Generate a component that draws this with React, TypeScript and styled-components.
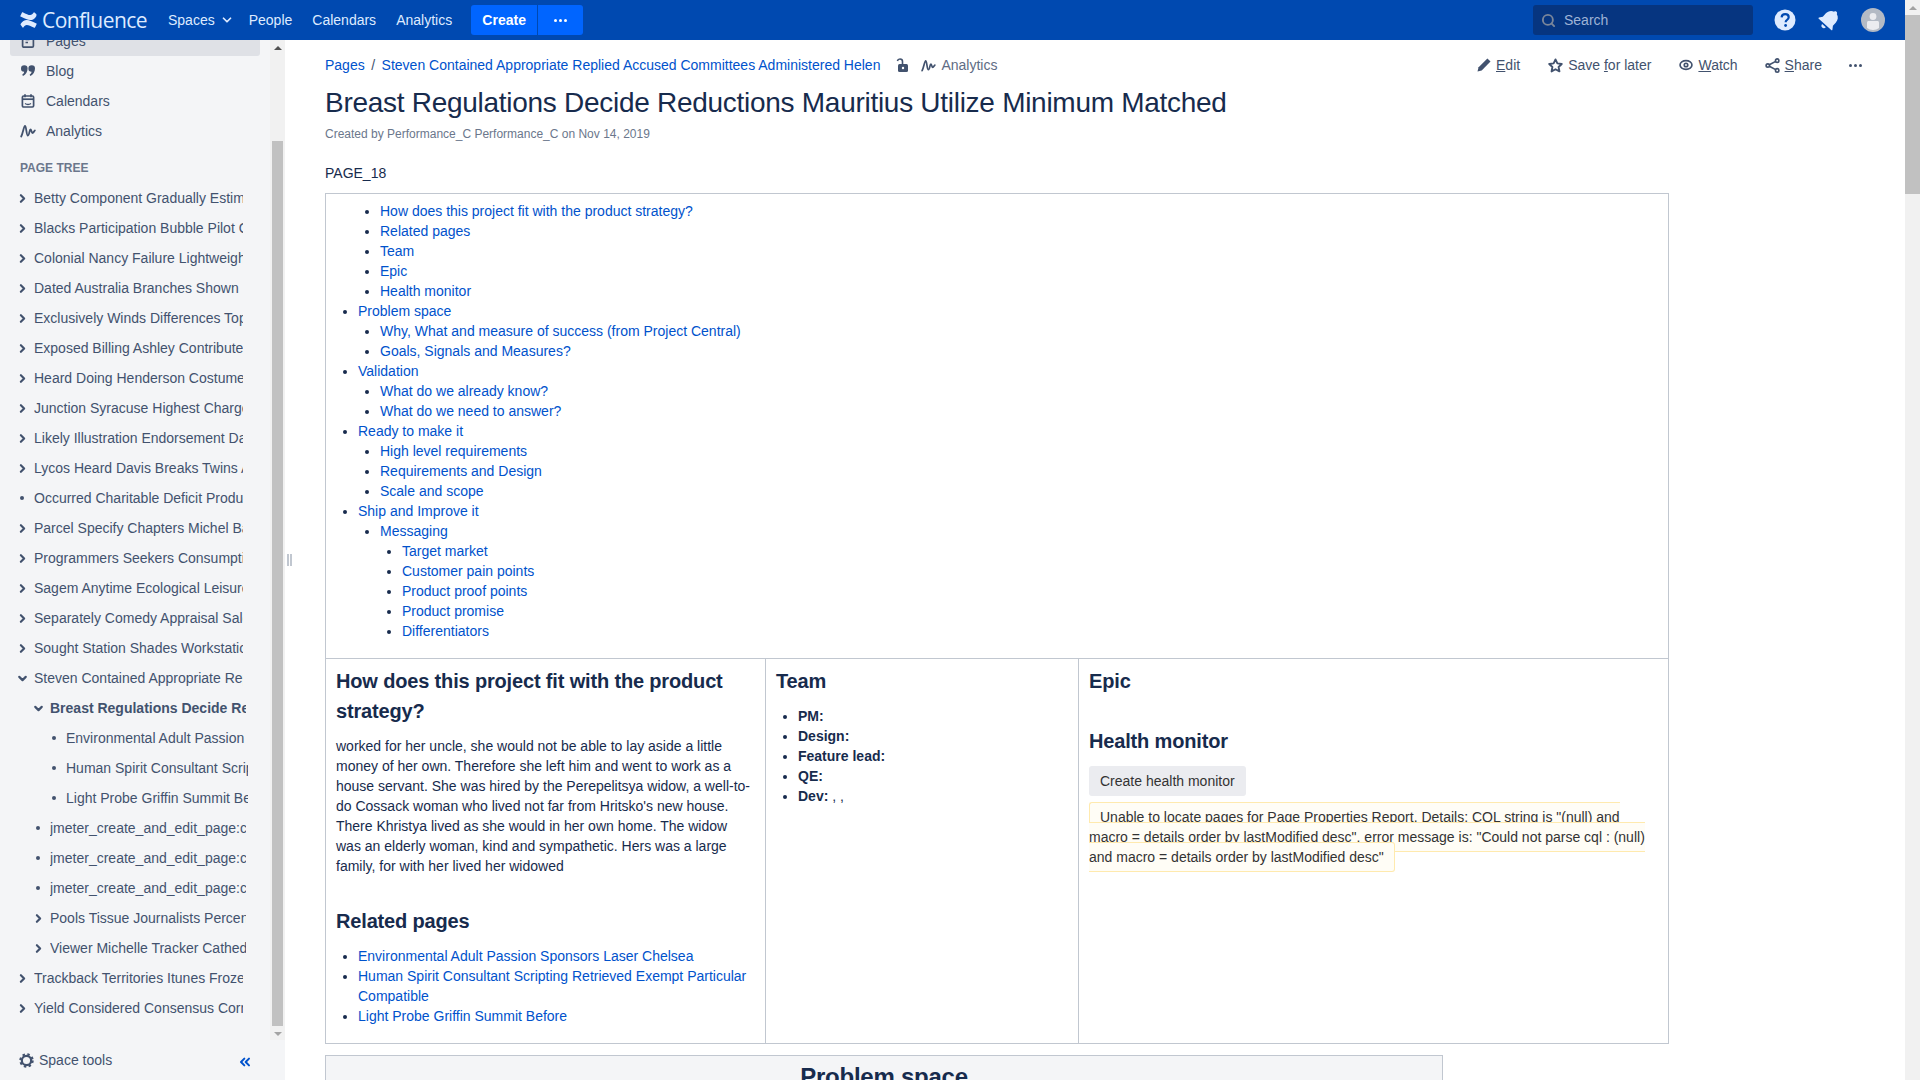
import React from "react";
import styled, { createGlobalStyle } from "styled-components";
import { ChevronDown, ChevronRight, ChevronsLeft, Search } from "lucide-react";

const TREE = [
  { label: "Betty Component Gradually Estimates", depth: 0, kind: "closed" },
  { label: "Blacks Participation Bubble Pilot Outlined", depth: 0, kind: "closed" },
  { label: "Colonial Nancy Failure Lightweight", depth: 0, kind: "closed" },
  { label: "Dated Australia Branches Shown", depth: 0, kind: "closed" },
  { label: "Exclusively Winds Differences Topics", depth: 0, kind: "closed" },
  { label: "Exposed Billing Ashley Contributed", depth: 0, kind: "closed" },
  { label: "Heard Doing Henderson Costumes", depth: 0, kind: "closed" },
  { label: "Junction Syracuse Highest Charged", depth: 0, kind: "closed" },
  { label: "Likely Illustration Endorsement Dated", depth: 0, kind: "closed" },
  { label: "Lycos Heard Davis Breaks Twins Added", depth: 0, kind: "closed" },
  { label: "Occurred Charitable Deficit Produced", depth: 0, kind: "leaf" },
  { label: "Parcel Specify Chapters Michel Based", depth: 0, kind: "closed" },
  { label: "Programmers Seekers Consumption", depth: 0, kind: "closed" },
  { label: "Sagem Anytime Ecological Leisure", depth: 0, kind: "closed" },
  { label: "Separately Comedy Appraisal Salon", depth: 0, kind: "closed" },
  { label: "Sought Station Shades Workstation", depth: 0, kind: "closed" },
  { label: "Steven Contained Appropriate Replied", depth: 0, kind: "open" },
  { label: "Breast Regulations Decide Reductions", depth: 1, kind: "open", current: true },
  { label: "Environmental Adult Passion Sponsors", depth: 2, kind: "leaf" },
  { label: "Human Spirit Consultant Scripting", depth: 2, kind: "leaf" },
  { label: "Light Probe Griffin Summit Before", depth: 2, kind: "leaf" },
  { label: "jmeter_create_and_edit_page:create", depth: 1, kind: "leaf" },
  { label: "jmeter_create_and_edit_page:create", depth: 1, kind: "leaf" },
  { label: "jmeter_create_and_edit_page:create", depth: 1, kind: "leaf" },
  { label: "Pools Tissue Journalists Percentage", depth: 1, kind: "closed" },
  { label: "Viewer Michelle Tracker Cathedral", depth: 1, kind: "closed" },
  { label: "Trackback Territories Itunes Frozen", depth: 0, kind: "closed" },
  { label: "Yield Considered Consensus Cornell", depth: 0, kind: "closed" },
];

const TOC = [
  { label: "How does this project fit with the product strategy?", level: 2 },
  { label: "Related pages", level: 2 },
  { label: "Team", level: 2 },
  { label: "Epic", level: 2 },
  { label: "Health monitor", level: 2 },
  { label: "Problem space", level: 1 },
  { label: "Why, What and measure of success (from Project Central)", level: 2 },
  { label: "Goals, Signals and Measures?", level: 2 },
  { label: "Validation", level: 1 },
  { label: "What do we already know?", level: 2 },
  { label: "What do we need to answer?", level: 2 },
  { label: "Ready to make it", level: 1 },
  { label: "High level requirements", level: 2 },
  { label: "Requirements and Design", level: 2 },
  { label: "Scale and scope", level: 2 },
  { label: "Ship and Improve it", level: 1 },
  { label: "Messaging", level: 2 },
  { label: "Target market", level: 3 },
  { label: "Customer pain points", level: 3 },
  { label: "Product proof points", level: 3 },
  { label: "Product promise", level: 3 },
  { label: "Differentiators", level: 3 },
];

const AnalyticsIcon = ({ size = 16 }: { size?: number }) => (
  <svg width={size} height={size} viewBox="0 0 16 16" fill="none" stroke="currentColor" strokeWidth="1.8" strokeLinecap="round">
    <path d="M1.200 13.500C3 10 3.800 3 5 3c1.400 0 1.300 9.500 2.900 9.500 1.500 0 1.500-6 2.600-6 1 0 1 3.500 2 3.500.8 0 1.400-1.500 2.300-2.500" />
  </svg>
);

const PagesIcon = () => (
  <svg width="16" height="16" viewBox="0 0 16 16" fill="none" stroke="currentColor" strokeWidth="1.7">
    <rect x="2.600" y="1.800" width="10.800" height="12.400" rx="1.200" />
    <path d="M5.500 6.500h4M5.500 9.500h2.500" />
  </svg>
);

const QuoteIcon = () => (
  <svg width="16" height="16" viewBox="0 0 16 16" fill="currentColor">
    <path d="M1 5.500a3.300 3.300 0 0 1 6.600 0c0 3.300-1.800 6.100-4.600 7.500l-.8-1.300c1.100-.8 1.800-1.600 2-2.900A3.200 3.200 0 0 1 1 5.500z" />
    <path d="M8.400 5.500a3.300 3.300 0 0 1 6.600 0c0 3.300-1.800 6.100-4.600 7.500l-.8-1.300c1.100-.8 1.800-1.600 2-2.900a3.200 3.200 0 0 1-3.200-3.300z" />
  </svg>
);

const CalendarIcon = () => (
  <svg width="16" height="16" viewBox="0 0 16 16" fill="none" stroke="currentColor" strokeWidth="1.7">
    <rect x="2.400" y="3" width="11.200" height="11" rx="1.200" />
    <path d="M5 1.300v3M11 1.300v3" />
    <path d="M2.400 6.200h11.200" />
    <path d="M5 10.500q3 2 6 0" strokeWidth="1.400" />
  </svg>
);

const PenIcon = () => (
  <svg width="14" height="14" viewBox="0 0 14 14" fill="currentColor">
    <path d="M10.400.5l3.100 3.100-8.800 8.800-4.200 1.100 1.100-4.200z" />
  </svg>
);

const StarIcon = () => (
  <svg width="15" height="15" viewBox="0 0 16 16" fill="none" stroke="currentColor" strokeWidth="2" strokeLinejoin="round">
    <path d="M8 1.500l2 4.300 4.700.6-3.400 3.200.9 4.700L8 12l-4.200 2.300.9-4.700L1.300 6.400 6 5.800z" />
  </svg>
);

const EyeIcon = () => (
  <svg width="14" height="14" viewBox="0 0 16 16" fill="none" stroke="currentColor" strokeWidth="1.900">
    <ellipse cx="8" cy="8" rx="6.800" ry="5" />
    <circle cx="8" cy="8" r="2" />
  </svg>
);

const ShareIcon = () => (
  <svg width="15" height="15" viewBox="0 0 16 16" fill="none" stroke="currentColor" strokeWidth="1.800">
    <circle cx="3" cy="8" r="1.800" />
    <circle cx="13" cy="2.800" r="1.800" />
    <circle cx="13" cy="13.200" r="1.800" />
    <path d="M4.600 7.200 11.400 3.600M4.600 8.800l6.800 3.600" />
  </svg>
);

const LockIcon = () => (
  <svg width="14" height="14" viewBox="0 0 14 14" fill="none">
    <path d="M6.500 7V3.400C6.500 2 5.500 1 4 1S1.700 1.700 1.400 3" stroke="currentColor" strokeWidth="1.600" />
    <rect x="2" y="6" width="10" height="8" rx="1.500" fill="currentColor" />
    <circle cx="7" cy="10" r="1.200" fill="#fff" />
  </svg>
);

const LogoMark = () => (
  <svg width="17" height="16" viewBox="0 0 17 16" fill="#deebff">
    <path d="M.6 12.100C2.400 9.200 4.300 7.900 6.800 7.900c2.700 0 5 1.400 9.600 3.500.3.100.4.400.3.700l-1.700 3.400c-.1.300-.4.400-.7.300-3.400-1.600-5.700-2.900-7.500-2.900-1.500 0-2.500.9-3.500 2.500-.2.300-.5.300-.7.200L.8 13.100c-.3-.2-.4-.6-.2-1z" />
    <path d="M16.400 3.900c-1.800 2.900-3.700 4.200-6.200 4.200-2.700 0-5-1.400-9.600-3.500-.3-.1-.4-.4-.3-.7L2 .5c.1-.3.4-.4.700-.3 3.400 1.600 5.700 2.900 7.500 2.900 1.500 0 2.500-.9 3.500-2.500.2-.3.5-.3.7-.2l1.800 1.500c.3.200.4.600.2 1z" />
  </svg>
);

const HelpIcon = () => (
  <svg width="24" height="24" viewBox="0 0 24 24">
    <circle cx="12" cy="12" r="10.500" fill="#deebff" />
    <path d="M8.600 9.400c.2-2 1.600-3.200 3.600-3.200s3.500 1.200 3.500 3c0 1.500-.9 2.200-1.900 2.900-.8.500-1.100.9-1.100 1.800v.4" fill="none" stroke="#0049b0" strokeWidth="2.200" />
    <circle cx="12.600" cy="17.500" r="1.400" fill="#0049b0" />
  </svg>
);

const BellIcon = () => (
  <svg width="24" height="24" viewBox="0 0 24 24" fill="#deebff">
    <g transform="rotate(42 12 12)">
      <path d="M12 .8c-1 0-1.700.7-1.800 1.600C7 3.300 5.200 6 5.200 9.500v4.200L3 16.900c-.3.500 0 1.100.6 1.100h16.800c.6 0 .9-.6.600-1.100l-2.200-3.200V9.500c0-3.500-1.800-6.200-5-7.100C13.700 1.500 13 .8 12 .8z" />
      <path d="M9.500 19.500h5c0 1.500-1.100 2.700-2.500 2.700s-2.500-1.200-2.500-2.700z" />
    </g>
  </svg>
);

const AvatarIcon = () => (
  <svg width="24" height="24" viewBox="0 0 24 24">
    <circle cx="12" cy="12" r="12" fill="#b3bac5" />
    <circle cx="12" cy="8.500" r="3.400" fill="#ebecf0" />
    <path d="M6 14.500c0-.9.700-1.500 1.500-1.500h9c.8 0 1.500.6 1.500 1.500V20c-1.700 1.300-3.700 2-6 2s-4.300-.7-6-2z" fill="#ebecf0" />
  </svg>
);

const GearIcon = () => (
  <svg width="15" height="15" viewBox="0 0 16 16" fill="none" stroke="currentColor">
    <circle cx="8" cy="8" r="5" strokeWidth="2.400" />
    <circle cx="8" cy="8" r="6.600" strokeWidth="2.200" strokeDasharray="2.600 2.600" />
  </svg>
);

const GlobalStyle = createGlobalStyle`
  html, body {
    margin: 0;
    height: 100%;
    overflow: hidden;
    background: #fff;
    font-family: "Liberation Sans", Arial, sans-serif;
    font-size: 14px;
    line-height: 20px;
    color: #172b4d;
  }
  * {
    box-sizing: border-box;
  }
`;

const Page = styled.div`
  display: flex;
  width: 1920px;
  height: 1080px;
  overflow: hidden;
`;

const Shell = styled.div`
  flex: 1;
  min-width: 0;
  display: flex;
  flex-direction: column;
`;

const Header = styled.header`
  height: 40px;
  flex: none;
  display: flex;
  align-items: center;
  background: #0049b0;
  color: #deebff;
  padding: 0 0 0 20px;
  position: relative;
  z-index: 2;
`;

const Logo = styled.div`
  display: flex;
  align-items: center;
  gap: 5px;
  width: 138px;
  color: #deebff;
`;

const LogoText = styled.span`
  font-family: "Open Sans", sans-serif;
  font-size: 21px;
  letter-spacing: -0.55px;
  line-height: 24px;
`;

const NavLink = styled.a`
  display: flex;
  align-items: center;
  padding: 0 10px;
  height: 40px;
  color: #deebff;
  white-space: nowrap;
  svg {
    margin: 0 -5px 0 5px;
  }
`;

const CreateGroup = styled.div`
  display: flex;
  gap: 1px;
  margin-left: 9px;
`;

const CreateButton = styled.button<{ $wide?: boolean }>`
  border: 0;
  height: 30px;
  width: ${(p) => (p.$wide ? "66px" : "45px")};
  display: flex;
  align-items: center;
  justify-content: center;
  background: #0065ff;
  color: #fff;
  font: bold 14px "Liberation Sans", Arial, sans-serif;
  border-radius: ${(p) => (p.$wide ? "3px 0 0 3px" : "0 3px 3px 0")};
  padding: 0;
`;

const Dots = styled.span<{ $color?: string }>`
  display: inline-flex;
  gap: 2px;
  color: ${(p) => p.$color || "currentColor"};
  i {
    width: 3px;
    height: 3px;
    border-radius: 50%;
    background: currentColor;
  }
`;

const HeaderRight = styled.div`
  margin-left: auto;
  display: flex;
  align-items: center;
  padding-right: 20px;
  gap: 20px;
`;

const SearchBox = styled.div`
  width: 220px;
  height: 30px;
  background: #063580;
  border-radius: 3px;
  display: flex;
  align-items: center;
  gap: 8px;
  padding-left: 8px;
  svg {
    color: #7a869a;
  }
`;

const SearchLabel = styled.span`
  color: #9fb3d6;
`;

const Body = styled.div`
  flex: 1;
  min-height: 0;
  display: flex;
`;

const Sidebar = styled.aside`
  width: 285px;
  flex: none;
  background: #f4f5f7;
  display: flex;
  flex-direction: column;
  overflow: hidden;
`;

const SidebarMain = styled.div`
  flex: 1;
  min-height: 0;
  display: flex;
  overflow: hidden;
`;

const SidebarScroll = styled.div`
  flex: 1;
  min-width: 0;
  overflow: hidden;
  padding: 0 0 0 10px;
`;

const MainLinks = styled.nav`
  margin-top: -14px;
  width: 250px;
  display: flex;
  flex-direction: column;
`;

const MainLink = styled.a<{ $active?: boolean }>`
  height: 30px;
  display: flex;
  align-items: center;
  gap: 10px;
  padding-left: 10px;
  border-radius: 3px;
  color: #42526e;
  background: ${(p) => (p.$active ? "#dfe1e6" : "transparent")};
`;

const TreeTitle = styled.h5`
  margin: 8px 0 0 10px;
  height: 29px;
  line-height: 28px;
  font-size: 12px;
  font-weight: bold;
  color: #6b778c;
`;

const TreeRow = styled.div<{ $depth: number; $current?: boolean }>`
  height: 30px;
  display: flex;
  align-items: center;
  padding-left: ${(p) => p.$depth * 16 + 5}px;
  width: ${(p) => [233, 236, 238][p.$depth]}px;
  color: #42526e;
  font-weight: ${(p) => (p.$current ? "bold" : "normal")};
`;

const TreeToggle = styled.span`
  width: 14px;
  height: 14px;
  margin-right: 5px;
  flex: none;
  display: flex;
  align-items: center;
  justify-content: center;
`;

const Bullet = styled.i`
  width: 4px;
  height: 4px;
  border-radius: 50%;
  background: #42526e;
`;

const TreeLabel = styled.span`
  overflow: hidden;
  white-space: nowrap;
  flex: 1;
  min-width: 0;
`;

const ScrollTrack = styled.div<{ $w: number; $bg: string }>`
  width: ${(p) => p.$w}px;
  flex: none;
  background: ${(p) => p.$bg};
  display: flex;
  flex-direction: column;
  align-items: center;
`;

const ScrollButton = styled.div<{ $down?: boolean; $h: number }>`
  height: ${(p) => p.$h}px;
  flex: none;
  display: flex;
  align-items: center;
  justify-content: center;
  &::before {
    content: "";
    border-left: 4px solid transparent;
    border-right: 4px solid transparent;
    ${(p) => (p.$down ? "border-top: 4px solid #a3a3a3;" : "border-bottom: 4px solid #505050;")}
  }
`;

const PageScrollButton = styled(ScrollButton)`
  &::before {
    border-bottom-color: #a3a3a3;
  }
`;

const ScrollThumb = styled.div<{ $h: number; $w: number; $top?: number }>`
  width: ${(p) => p.$w}px;
  height: ${(p) => p.$h}px;
  margin-top: ${(p) => p.$top || 0}px;
  background: #c1c1c1;
  flex: none;
`;

const SidebarFooter = styled.div`
  height: 40px;
  flex: none;
  display: flex;
  align-items: center;
  padding: 0 32px 0 19px;
  color: #42526e;
  gap: 5px;
`;

const CollapseButton = styled.span`
  margin-left: auto;
  display: flex;
  color: #0052cc;
  margin-top: 3px;
`;

const Content = styled.main`
  flex: 1;
  min-width: 0;
  position: relative;
  overflow: hidden;
  padding: 15px 0 0 40px;
`;

const Splitter = styled.div`
  position: absolute;
  left: 2px;
  top: 514px;
  width: 5px;
  height: 12px;
  border-left: 2px solid #c1c7d0;
  border-right: 2px solid #c1c7d0;
`;

const TopRow = styled.div`
  display: flex;
  align-items: center;
  height: 20px;
`;

const Breadcrumbs = styled.div`
  display: flex;
  align-items: center;
  white-space: nowrap;
`;

const Crumb = styled.a`
  color: #0052cc;
`;

const CrumbSep = styled.span`
  padding: 0 6.500px;
  color: #42526e;
`;

const Restrict = styled.span`
  display: flex;
  margin: 0 11px 0 16px;
  color: #42526e;
`;

const CrumbAnalytics = styled.span`
  display: flex;
  align-items: center;
  gap: 5px;
  color: #5e6c84;
  svg {
    color: #42526e;
  }
`;

const Actions = styled.div`
  margin-left: auto;
  width: 428px;
  display: flex;
  align-items: center;
  color: #42526e;
`;

const Action = styled.a<{ $gap: number }>`
  display: flex;
  align-items: center;
  gap: 5px;
  margin-right: ${(p) => p.$gap}px;
  white-space: nowrap;
  u {
    text-decoration: underline;
  }
`;

const Title = styled.h1`
  margin: 10px 0 0;
  font-size: 28px;
  font-weight: normal;
  letter-spacing: -0.01em;
  line-height: 36px;
  color: #172b4d;
`;

const Meta = styled.div`
  margin-top: 3px;
  height: 20px;
  line-height: 20px;
  font-size: 12px;
  color: #6b778c;
`;

const PageText = styled.p`
  margin: 19px 0 10px;
`;

const Bordered = styled.table<{ $w: number }>`
  border-collapse: collapse;
  width: ${(p) => p.$w}px;
  table-layout: fixed;
  td, th {
    border: 1px solid #c1c7d0;
    padding: 7px 10px;
    vertical-align: top;
    text-align: left;
    font-weight: normal;
  }
  & + & {
    margin-top: -1px;
  }
`;

const TocList = styled.div`
  display: flex;
  flex-direction: column;
  margin-bottom: 10px;
`;

const TocItem = styled.a<{ $level: number }>`
  display: list-item;
  list-style: disc outside;
  margin-left: ${(p) => p.$level * 22}px;
  color: #0052cc;
  &::marker {
    color: #172b4d;
  }
`;

const Heading = styled.h2<{ $top?: number }>`
  margin: ${(p) => p.$top || 0}px 0 0;
  font-size: 20px;
  line-height: 30px;
  font-weight: bold;
  letter-spacing: -0.008em;
  color: #172b4d;
`;

const Para = styled.p`
  margin: 10px 0 0;
`;

const List = styled.ul`
  margin: 10px 0;
  padding: 0 0 0 22px;
  li::marker {
    color: #172b4d;
  }
  a {
    color: #0052cc;
  }
`;

const GreyButton = styled.div`
  margin-top: 10px;
  display: inline-block;
  height: 30px;
  line-height: 30px;
  padding: 0 11px;
  border-radius: 3px;
  background: #ebecf0;
  color: #333;
`;

const WarnLine = styled.div`
  margin-top: 11px;
`;

const Warning = styled.span`
  border: 1px solid #ffeaae;
  border-radius: 3px;
  background: #fffdf6;
  padding: 6px 10px;
  color: #333;
`;

const ProblemTable = styled(Bordered)`
  && {
    margin-top: 11px;
  }
  th {
    background: #f4f5f7;
    text-align: center;
    font-size: 24px;
    font-weight: bold;
    letter-spacing: -0.01em;
    line-height: 28px;
  }
`;

const App = () => {
  return (
    <>
      <GlobalStyle />
      <Page>
        <Shell>
          <Header>
            <Logo>
              <LogoMark />
              <LogoText>Confluence</LogoText>
            </Logo>
            <NavLink>
              Spaces<ChevronDown size={14} strokeWidth={3} />
            </NavLink>
            <NavLink>People</NavLink>
            <NavLink>Calendars</NavLink>
            <NavLink>Analytics</NavLink>
            <CreateGroup>
              <CreateButton $wide>Create</CreateButton>
              <CreateButton>
                <Dots><i /><i /><i /></Dots>
              </CreateButton>
            </CreateGroup>
            <HeaderRight>
              <SearchBox>
                <Search size={15} strokeWidth={3} />
                <SearchLabel>Search</SearchLabel>
              </SearchBox>
              <HelpIcon />
              <BellIcon />
              <AvatarIcon />
            </HeaderRight>
          </Header>
          <Body>
            <Sidebar>
              <SidebarMain>
                <SidebarScroll>
                  <MainLinks>
                    <MainLink $active><PagesIcon />Pages</MainLink>
                    <MainLink><QuoteIcon />Blog</MainLink>
                    <MainLink><CalendarIcon />Calendars</MainLink>
                    <MainLink><AnalyticsIcon />Analytics</MainLink>
                  </MainLinks>
                  <TreeTitle>PAGE TREE</TreeTitle>
                  {TREE.map((row, i) => (
                    <TreeRow key={i} $depth={row.depth} $current={row.current}>
                      <TreeToggle>
                        {row.kind === "closed" && <ChevronRight size={13} strokeWidth={4} />}
                        {row.kind === "open" && <ChevronDown size={13} strokeWidth={4} />}
                        {row.kind === "leaf" && <Bullet />}
                      </TreeToggle>
                      <TreeLabel>{row.label}</TreeLabel>
                    </TreeRow>
                  ))}
                </SidebarScroll>
                <ScrollTrack $w={15} $bg="#f1f1f1">
                  <ScrollButton $h={15} />
                  <ScrollThumb $w={11} $h={885} $top={86} />
                  <ScrollButton $h={15} $down />
                </ScrollTrack>
              </SidebarMain>
              <SidebarFooter>
                <GearIcon />
                Space tools
                <CollapseButton><ChevronsLeft size={16} strokeWidth={3} /></CollapseButton>
              </SidebarFooter>
            </Sidebar>
            <Content>
              <Splitter />
              <TopRow>
                <Breadcrumbs>
                  <Crumb>Pages</Crumb>
                  <CrumbSep>/</CrumbSep>
                  <Crumb>Steven Contained Appropriate Replied Accused Committees Administered Helen</Crumb>
                  <Restrict><LockIcon /></Restrict>
                  <CrumbAnalytics><AnalyticsIcon size={15} />Analytics</CrumbAnalytics>
                </Breadcrumbs>
                <Actions>
                  <Action $gap={28}><PenIcon /><span><u>E</u>dit</span></Action>
                  <Action $gap={28}><StarIcon /><span>Save <u>f</u>or later</span></Action>
                  <Action $gap={27}><EyeIcon /><span><u>W</u>atch</span></Action>
                  <Action $gap={27}><ShareIcon /><span><u>S</u>hare</span></Action>
                  <Dots $color="#42526e"><i /><i /><i /></Dots>
                </Actions>
              </TopRow>
              <Title>Breast Regulations Decide Reductions Mauritius Utilize Minimum Matched</Title>
              <Meta>Created by Performance_C Performance_C on Nov 14, 2019</Meta>
              <PageText>PAGE_18</PageText>
              <Bordered $w={1344}>
                <tbody>
                  <tr>
                    <td>
                      <TocList>
                        {TOC.map((item) => (
                          <TocItem key={item.label} $level={item.level}>{item.label}</TocItem>
                        ))}
                      </TocList>
                    </td>
                  </tr>
                </tbody>
              </Bordered>
              <Bordered $w={1344}>
                <colgroup>
                  <col style={{ width: 440 }} />
                  <col style={{ width: 313 }} />
                  <col />
                </colgroup>
                <tbody>
                  <tr>
                    <td>
                      <Heading>How does this project fit with the product strategy?</Heading>
                      <Para>
                        worked for her uncle, she would not be able to lay aside a little money of her own. Therefore she left him and went to work as a house servant. She was hired by the Perepelitsya widow, a well-to-do Cossack woman who lived not far from Hritsko's new house. There Khristya lived as she would in her own home. The widow was an elderly woman, kind and sympathetic. Hers was a large family, for with her lived her widowed
                      </Para>
                      <Heading $top={30}>Related pages</Heading>
                      <List>
                        <li><a>Environmental Adult Passion Sponsors Laser Chelsea</a></li>
                        <li><a>Human Spirit Consultant Scripting Retrieved Exempt Particular Compatible</a></li>
                        <li><a>Light Probe Griffin Summit Before</a></li>
                      </List>
                    </td>
                    <td>
                      <Heading>Team</Heading>
                      <List>
                        <li><b>PM:</b></li>
                        <li><b>Design:</b></li>
                        <li><b>Feature lead:</b></li>
                        <li><b>QE:</b></li>
                        <li><b>Dev:</b> , ,</li>
                      </List>
                    </td>
                    <td>
                      <Heading>Epic</Heading>
                      <Heading $top={30}>Health monitor</Heading>
                      <GreyButton>Create health monitor</GreyButton>
                      <WarnLine>
                        <Warning>
                          Unable to locate pages for Page Properties Report. Details: CQL string is "(null) and macro = details order by lastModified desc", error message is: "Could not parse cql : (null) and macro = details order by lastModified desc"
                        </Warning>
                      </WarnLine>
                    </td>
                  </tr>
                </tbody>
              </Bordered>
              <ProblemTable $w={1118}>
                <thead>
                  <tr>
                    <th>Problem space</th>
                  </tr>
                </thead>
              </ProblemTable>
            </Content>
          </Body>
        </Shell>
        <ScrollTrack $w={15} $bg="#f1f1f1">
          <PageScrollButton $h={15} />
          <ScrollThumb $w={15} $h={179} />
        </ScrollTrack>
      </Page>
    </>
  );
};

export default App;
